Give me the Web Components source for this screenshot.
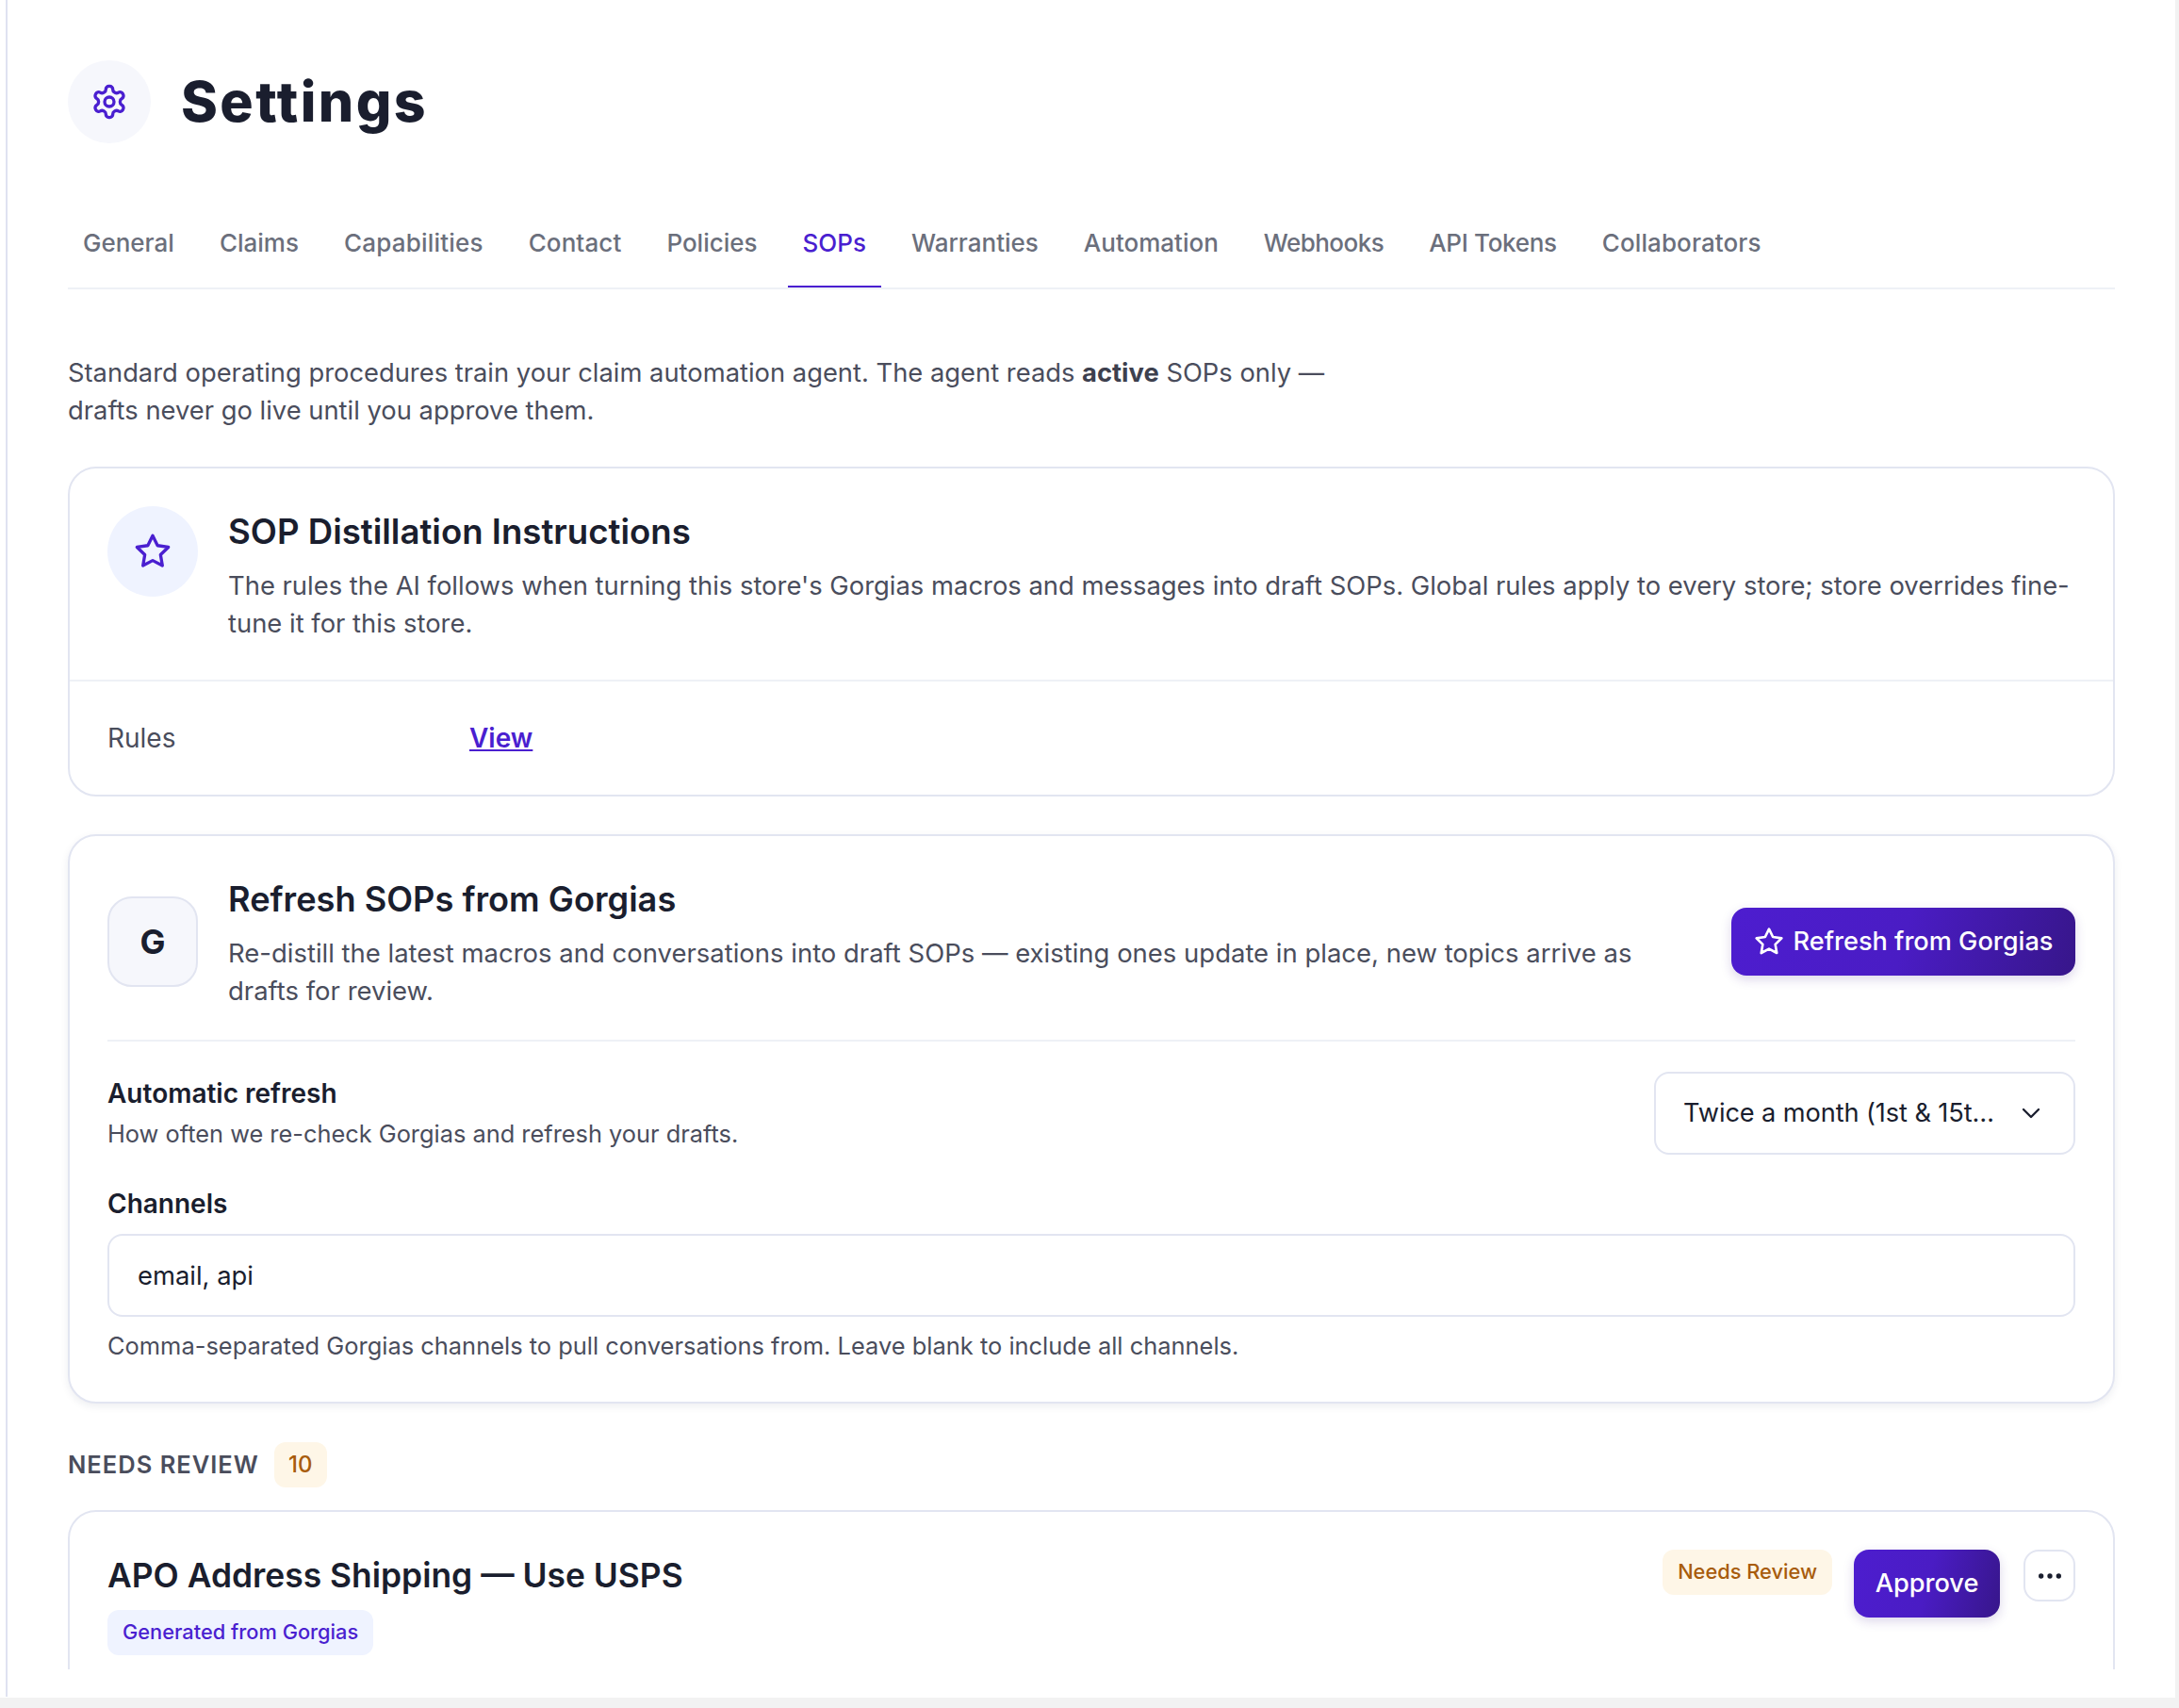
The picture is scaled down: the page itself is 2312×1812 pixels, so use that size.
<!DOCTYPE html>
<html lang="en"><head><meta charset="utf-8"><title>Settings</title>
<style>
html,body{margin:0;padding:0;background:#f2f2f2;}
body{font-family:Inter,"Liberation Sans",sans-serif;color:#1a1e2e;}
</style></head><body>
<app-shell>
  <page-header>Settings</page-header>
  <tab-bar>
    <tab-item>General</tab-item><tab-item>Claims</tab-item><tab-item style="letter-spacing:.2px">Capabilities</tab-item><tab-item style="letter-spacing:.1px">Contact</tab-item><tab-item>Policies</tab-item><tab-item active>SOPs</tab-item><tab-item>Warranties</tab-item><tab-item>Automation</tab-item><tab-item style="letter-spacing:-.55px">Webhooks</tab-item><tab-item style="letter-spacing:-.3px">API Tokens</tab-item><tab-item style="letter-spacing:.1px">Collaborators</tab-item>
  </tab-bar>
  <intro-text>Standard operating procedures train your claim automation agent. The agent reads <b>active</b> SOPs only —<br>drafts never go live until you approve them.</intro-text>
  <distill-card></distill-card>
  <refresh-card></refresh-card>
  <section-label count="10">NEEDS REVIEW</section-label>
  <sop-card heading="APO Address Shipping — Use USPS"></sop-card>
</app-shell>
<script>
const ICONS={
 gear:'<path d="M12.22 2h-.44a2 2 0 0 0-2 2v.18a2 2 0 0 1-1 1.73l-.43.25a2 2 0 0 1-2 0l-.15-.08a2 2 0 0 0-2.73.73l-.22.38a2 2 0 0 0 .73 2.73l.15.1a2 2 0 0 1 1 1.72v.51a2 2 0 0 1-1 1.74l-.15.09a2 2 0 0 0-.73 2.73l.22.38a2 2 0 0 0 2.73.73l.15-.08a2 2 0 0 1 2 0l.43.25a2 2 0 0 1 1 1.73V20a2 2 0 0 0 2 2h.44a2 2 0 0 0 2-2v-.18a2 2 0 0 1 1-1.73l.43-.25a2 2 0 0 1 2 0l.15.08a2 2 0 0 0 2.73-.73l.22-.39a2 2 0 0 0-.73-2.73l-.15-.08a2 2 0 0 1-1-1.74v-.5a2 2 0 0 1 1-1.74l.15-.09a2 2 0 0 0 .73-2.73l-.22-.38a2 2 0 0 0-2.73-.73l-.15.08a2 2 0 0 1-2 0l-.43-.25a2 2 0 0 1-1-1.73V4a2 2 0 0 0-2-2z"/><circle cx="12" cy="12" r="3"/>',
 star:'<polygon points="12 2 15.09 8.26 22 9.27 17 14.14 18.18 21.02 12 17.77 5.82 21.02 7 14.14 2 9.27 8.91 8.26 12 2"/>',
 chevron:'<path d="m6 9 6 6 6-6"/>',
 dots:'<circle cx="12" cy="12" r="1"/><circle cx="19" cy="12" r="1"/><circle cx="5" cy="12" r="1"/>'
};
function svg(name,size){return `<svg xmlns="http://www.w3.org/2000/svg" width="${size}" height="${size}" viewBox="0 0 24 24" fill="none" stroke="currentColor" stroke-width="2" stroke-linecap="round" stroke-linejoin="round" style="display:block;flex:none">${ICONS[name]}</svg>`;}
function el(tag,css,html){
  customElements.define(tag,class extends HTMLElement{
    constructor(){super();const r=this.attachShadow({mode:'open'});
      const h=typeof html==='function'?html(this):html;
      r.innerHTML=`<style>${css}</style>${h}`;}
    connectedCallback(){if(typeof html==='function'){const r=this.shadowRoot;r.innerHTML=`<style>${css}</style>${html(this)}`;}}
  });
}
el('app-shell',`:host{display:block;width:2308px;height:1801px;background:#fff;overflow:hidden;}
 .rail{margin-left:6px;height:1800px;border-left:2px solid #dfe2f1;}
 .in{height:1771px;overflow:hidden;box-sizing:border-box;padding:0 64px;}`,`<div class="rail"><div class="in"><slot></slot></div></div>`);
el('page-header',`:host{display:flex;align-items:center;gap:32px;padding-top:64px;height:88px;}
 .ic{width:88px;height:88px;border-radius:50%;background:#f6f7fc;color:#4a1fd0;display:flex;align-items:center;justify-content:center;flex:none}
 h1{margin:0;font:800 59px/88px Inter,sans-serif;color:#1a1e2e;letter-spacing:2.4px}`,
 `<div class="ic">${svg('gear',40)}</div><h1><slot></slot></h1>`);
el('tab-bar',`:host{display:flex;gap:16px;margin-top:60px;border-bottom:2px solid #eef1f6;}`,`<slot></slot>`);
el('tab-item',`:host{display:block;padding:26px 16px 27px;font:500 26px/40px Inter,sans-serif;color:#6b6f7c;white-space:nowrap;}
 :host([active]){color:#4a1fd0;box-shadow:inset 0 -2px 0 #4a1fd0}`,`<slot></slot>`);
el('intro-text',`:host{display:block;margin-top:69px;font:400 27.35px/40px Inter,sans-serif;color:#4a4d5c}
 ::slotted(b){color:#3d404e;font-weight:700}`,`<slot></slot>`);
const cardCss=`:host{display:block;box-sizing:border-box;border:2px solid #e2e5f1;border-radius:30px;background:#fff;}
 h2{margin:0;font:600 36px/52px Inter,sans-serif;color:#1a1e2e}
 p{margin:11px 0 0;font:400 27.4px/40px Inter,sans-serif;color:#4a4d5c}`;
el('distill-card',cardCss+`:host{margin-top:39px}
 h2{font-size:36.6px}
 .head{display:flex;gap:32px;padding:40px;border-bottom:2px solid #eef1f6;}
 .txt{padding-top:1px}
 .ic{width:96px;height:96px;border-radius:50%;background:#eff3ff;color:#4a1fd0;display:flex;align-items:center;justify-content:center;flex:none}
 .row{display:flex;padding:40px;font:400 28px/40px Inter,sans-serif;color:#4a4d5c}
 .lbl{width:384px;flex:none}
 a{color:#4a1fd0;font-weight:600;text-decoration:underline}`,
 `<div class="head"><div class="ic">${svg('star',40)}</div><div class="txt"><h2>SOP Distillation Instructions</h2><p>The rules the AI follows when turning this store's Gorgias macros and messages into draft SOPs. Global rules apply to every store; store overrides fine-tune it for this store.</p></div></div>
  <div class="row"><div class="lbl">Rules</div><a href="#">View</a></div>`);
el('primary-button',`:host{display:inline-flex;align-items:center;justify-content:center;gap:10px;box-sizing:border-box;height:72px;border-radius:16px;background:linear-gradient(105deg,#4d1dcf 0%,#4a1cc4 50%,#37168a 100%);color:#fff;font:500 27.15px/40px Inter,sans-serif;box-shadow:0 4px 12px rgba(60,30,140,.18);white-space:nowrap;flex:none}`,
 (e)=>`${e.hasAttribute('star')?svg('star',32):''}<slot></slot>`);
el('refresh-card',cardCss+`:host{margin-top:40px;padding:40px;box-shadow:0 3px 8px rgba(30,40,80,.08)}
 h2{font-size:36.2px}
 p{font-size:27.48px}
 .head{display:flex;align-items:flex-start;gap:32px;padding-bottom:32px;border-bottom:2px solid #eef1f6}
 .tile{width:96px;height:96px;margin-top:24px;box-sizing:border-box;border:2px solid #e2e5f1;border-radius:26px;background:#f6f7fc;display:flex;align-items:center;justify-content:center;font:700 36px/1 Inter,sans-serif;color:#1a1e2e;flex:none}
 .txt{flex:1;min-width:0;padding:1px 40px 0 0}
 primary-button{width:365px;margin-top:36px}
 .auto{display:flex;align-items:center;justify-content:space-between;margin-top:32px}
 .b{font:600 28px/40px Inter,sans-serif;color:#1a1e2e}
 .s{font:400 25.36px/40px Inter,sans-serif;color:#4a4d5c;margin-top:3px}
 .sel{width:447px;height:88px;box-sizing:border-box;border:2px solid #e2e5f1;border-radius:16px;display:flex;align-items:center;justify-content:space-between;padding:0 29px 0 29px;font:400 27.2px/40px Inter,sans-serif;letter-spacing:-.1px;color:#1a1e2e;white-space:nowrap}
 .sel svg{stroke-width:1.75}
 .chan{margin-top:32px}
 .inp{margin-top:12px;height:88px;box-sizing:border-box;border:2px solid #e2e5f1;border-radius:16px;display:flex;align-items:center;padding:0 30px;font:400 27.4px/40px Inter,sans-serif;color:#1a1e2e}
 .help{margin-top:12px;font:400 25.44px/38px Inter,sans-serif;color:#4a4d5c}`,
 `<div class="head"><div class="tile">G</div><div class="txt"><h2>Refresh SOPs from Gorgias</h2><p>Re-distill the latest macros and conversations into draft SOPs — existing ones update in place, new topics arrive as drafts for review.</p></div><primary-button star>Refresh from Gorgias</primary-button></div>
 <div class="auto"><div><div class="b">Automatic refresh</div><div class="s">How often we re-check Gorgias and refresh your drafts.</div></div><div class="sel"><span>Twice a month (1st &amp; 15t…</span>${svg('chevron',32)}</div></div>
 <div class="chan"><div class="b">Channels</div><div class="inp">email, api</div><div class="help">Comma-separated Gorgias channels to pull conversations from. Leave blank to include all channels.</div></div>`);
el('section-label',`:host{display:flex;align-items:center;gap:16px;margin-top:41px;font:600 25.5px/48px Inter,sans-serif;color:#4a4d5c;letter-spacing:1px}
 .n{width:56px;height:48px;border-radius:12px;background:#fef6e7;color:#a85c0c;font-weight:500;letter-spacing:0;font-size:24px;text-align:center}`,
 (e)=>`<slot></slot><span class="n">${e.getAttribute('count')||''}</span>`);
el('pill-tag',`:host{display:inline-block;height:48px;box-sizing:border-box;padding:0 16px;border-radius:12px;font:500 21.8px/46px Inter,sans-serif;white-space:nowrap;background:#eff3ff;color:#4a1fd0}
 :host([warn]){background:#fef6e7;color:#a85c0c}`,`<slot></slot>`);
el('sop-card',cardCss+`:host{margin-top:24px;padding:40px;display:flex;justify-content:space-between;align-items:flex-start;height:400px}
 h2{font-size:35.4px;margin-top:2px}
 .act{display:flex;align-items:flex-start}
 primary-button{width:155px;margin:0 25px 0 23px}
 .more{width:55px;height:55px;box-sizing:border-box;border:2px solid #e2e5f1;border-radius:16px;display:flex;align-items:center;justify-content:center;color:#1a1e2e}
 .more svg circle{fill:currentColor}
 pill-tag{margin-top:10px}`,
 (e)=>`<div><h2>${e.getAttribute('heading')||''}</h2><pill-tag>Generated from Gorgias</pill-tag></div>
 <div class="act"><pill-tag warn style="margin:0">Needs Review</pill-tag><primary-button>Approve</primary-button><div class="more">${svg('dots',32)}</div></div>`);
</script>
</body></html>
